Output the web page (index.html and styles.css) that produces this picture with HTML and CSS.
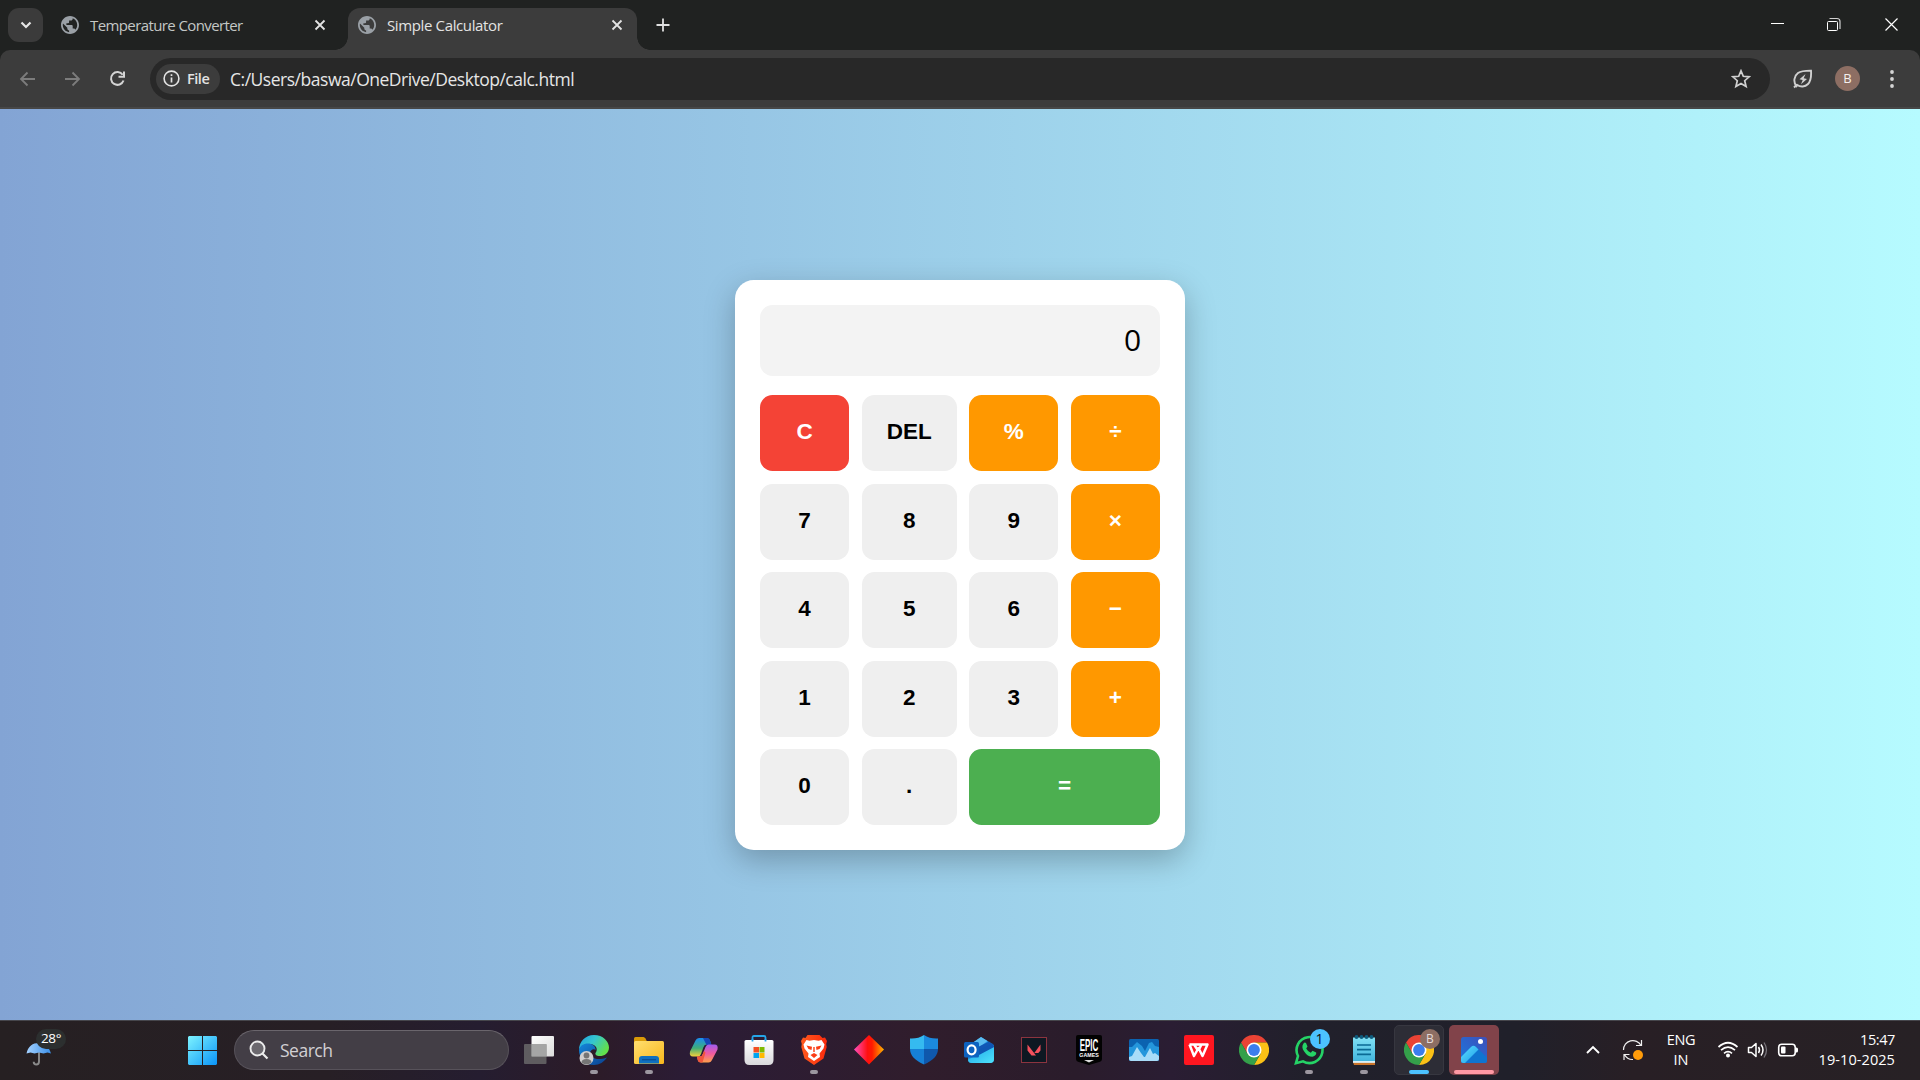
FILE: index.html
```html
<!DOCTYPE html>
<html lang="en">
<head>
<meta charset="utf-8">
<title>Simple Calculator</title>
<link rel="stylesheet" href="styles.css">
</head>
<body>
<svg width="0" height="0" class="defs" aria-hidden="true">
  <defs>
    <linearGradient id="win" x1="0" y1="0" x2="1" y2="1"><stop offset="0" stop-color="#7df3ff"/><stop offset="1" stop-color="#0a94f8"/></linearGradient>
    <linearGradient id="umb" x1="0" y1="0" x2="1" y2="0"><stop offset="0" stop-color="#a5d2ff"/><stop offset="1" stop-color="#3a8fe8"/></linearGradient>
    <linearGradient id="edgeTop" x1="0" y1="0" x2="1" y2="0.5"><stop offset="0" stop-color="#1d9fe0"/><stop offset=".5" stop-color="#35c6cf"/><stop offset="1" stop-color="#62e04c"/></linearGradient>
    <linearGradient id="edgeLow" x1="0" y1="0" x2="1" y2="1"><stop offset="0" stop-color="#1488dc"/><stop offset="1" stop-color="#0b3f8d"/></linearGradient>
    <linearGradient id="folder" x1="0" y1="0" x2="1" y2="1"><stop offset="0" stop-color="#ffdf70"/><stop offset="1" stop-color="#f8b71c"/></linearGradient>
    <linearGradient id="copA" x1="0" y1="0" x2="0" y2="1"><stop offset="0" stop-color="#1a8df0"/><stop offset=".55" stop-color="#3fae78"/><stop offset="1" stop-color="#f4d03a"/></linearGradient>
    <linearGradient id="copB" x1="0" y1="0" x2="0" y2="1"><stop offset="0" stop-color="#a05cf0"/><stop offset=".5" stop-color="#ef5aa0"/><stop offset="1" stop-color="#ffa04a"/></linearGradient>
    <linearGradient id="bag" x1="0" y1="0" x2="0" y2="1"><stop offset="0" stop-color="#ffffff"/><stop offset="1" stop-color="#d9d9dc"/></linearGradient>
    <linearGradient id="brave" x1="0" y1="0" x2="1" y2="0"><stop offset="0" stop-color="#ff5a1e"/><stop offset="1" stop-color="#fb2a0c"/></linearGradient>
    <linearGradient id="dia" x1="0" y1="0" x2="1" y2="0"><stop offset="0" stop-color="#ff4fc0"/><stop offset=".45" stop-color="#ff1010"/><stop offset=".6" stop-color="#ff1a00"/><stop offset="1" stop-color="#ffb400"/></linearGradient>
    <linearGradient id="mail" x1="0" y1="0" x2="1" y2="1"><stop offset="0" stop-color="#1ea4e8"/><stop offset="1" stop-color="#4fe3fb"/></linearGradient>
    <linearGradient id="pad" x1="0" y1="0" x2="0" y2="1"><stop offset="0" stop-color="#7fe0f4"/><stop offset="1" stop-color="#3fb3dc"/></linearGradient>
    <linearGradient id="photo" x1="1" y1="0" x2="0" y2="1"><stop offset="0" stop-color="#3e4fb8"/><stop offset="1" stop-color="#1a78e0"/></linearGradient>
    <linearGradient id="hill" x1="0" y1="0" x2="1" y2="1"><stop offset="0" stop-color="#5fdcff"/><stop offset="1" stop-color="#1a9fe8"/></linearGradient>
    <linearGradient id="task" x1="0" y1="0" x2="1" y2="1"><stop offset="0" stop-color="#ffffff"/><stop offset="1" stop-color="#dcdcdc"/></linearGradient>
  </defs>
  <symbol id="globe" viewBox="2 2 20 20">
    <path d="M12 2C6.480 2 2 6.480 2 12s4.480 10 10 10 10-4.480 10-10S17.520 2 12 2zm-1 17.930c-3.950-.490-7-3.850-7-7.930 0-.620.080-1.210.210-1.790L9 15v1c0 1.100.900 2 2 2v1.930zm6.900-2.540c-.260-.810-1-1.390-1.900-1.390h-1v-3c0-.550-.450-1-1-1H8v-2h2c.550 0 1-.450 1-1V7h2c1.100 0 2-.900 2-2v-.410c2.930 1.190 5 4.060 5 7.410 0 2.080-.800 3.970-2.100 5.390z" fill="#9aa0a6"/>
  </symbol>
  <symbol id="x" viewBox="0 0 12 12"><path d="M1.500 1.500l9 9M10.500 1.500l-9 9" stroke="#e3e3e3" stroke-width="1.800" fill="none"/></symbol>
  <symbol id="chrome" viewBox="0 0 30 30">
    <path d="M2 7.500A15 15 0 0 1 28 7.500L15 7.500 8.500 18.800z" fill="#ea4335"/>
    <path d="M28 7.500A15 15 0 0 1 15 30l6.500-11.200L15 7.500z" fill="#fbc116"/>
    <path d="M2 7.500A15 15 0 0 0 15 30l6.500-11.200H8.500z" fill="#34a04a"/>
    <circle cx="15" cy="15" r="7.500" fill="#fff"/><circle cx="15" cy="15" r="5.900" fill="#3b7ded"/>
  </symbol>
</svg>

<header class="tabstrip">
  <button class="tab-search" aria-label="Search tabs"><svg width="12" height="8" viewBox="0 0 12 8"><path d="M1.500 1.500L6 6l4.500-4.500" fill="none" stroke="#e6e6e6" stroke-width="2.200"/></svg></button>
  <div class="tab">
    <svg class="favicon"><use href="#globe"/></svg>
    <span class="tab-title title-long">Temperature Converter</span>
    <svg class="tab-close"><use href="#x"/></svg>
  </div>
  <div class="tab active">
    <svg class="favicon"><use href="#globe"/></svg>
    <span class="tab-title title-short">Simple Calculator</span>
    <svg class="tab-close"><use href="#x"/></svg>
  </div>
  <svg class="new-tab" width="14" height="14" viewBox="0 0 14 14"><path d="M7 0.500v13M.5 7h13" stroke="#e0e0e0" stroke-width="1.800"/></svg>
  <div class="window-controls">
    <svg viewBox="0 0 57 50"><path d="M22 23.500h13" stroke="#fff" stroke-width="1"/></svg>
    <svg viewBox="0 0 57 50"><rect x="21.500" y="21.500" width="10" height="9" rx="1" fill="none" stroke="#fff"/><path d="M23.500 18.500h7.500q3 0 3 3v7.500" fill="none" stroke="#d0d0d0" stroke-width="1.200"/></svg>
    <svg viewBox="0 0 57 50"><path d="M22.500 18.500l12 12M34.500 18.500l-12 12" stroke="#fff" stroke-width="1.200"/></svg>
  </div>
</header>

<nav class="toolbar">
  <div class="nav-buttons">
    <svg viewBox="0 0 45 42"><path d="M35 21H21M27.500 14.500L21 21l6.500 6.500" fill="none" stroke="#7c7c7c" stroke-width="1.800"/></svg>
    <svg viewBox="0 0 45 42"><path d="M20 21h14M27.500 14.500L34 21l-6.500 6.500" fill="none" stroke="#7c7c7c" stroke-width="1.800"/></svg>
    <svg viewBox="0 0 45 42"><path d="M32.700 16.800A6.400 6.400 0 1 0 33.500 22.500" fill="none" stroke="#d4d4d4" stroke-width="2"/><path d="M34 13.500v5.300h-5.500" fill="none" stroke="#d4d4d4" stroke-width="2"/></svg>
  </div>
  <div class="omnibox">
    <span class="chip">
      <svg width="17" height="17" viewBox="0 0 17 17"><circle cx="8.500" cy="8.500" r="7.400" fill="none" stroke="#e3e3e3" stroke-width="1.600"/><path d="M8.500 7.500v5M8.500 4.200v1.800" stroke="#e3e3e3" stroke-width="1.700"/></svg>
      <span class="chip-text">File</span>
    </span>
    <span class="url">C:/Users/baswa/OneDrive/Desktop/calc.html</span>
    <svg class="star" width="20" height="20" viewBox="0 0 20 20"><path d="M10 1.800l2.300 5.500 5.900.5-4.500 3.900 1.400 5.800L10 14.400l-5.100 3.100 1.400-5.800-4.500-3.900 5.900-.5z" fill="none" stroke="#d0d0d0" stroke-width="1.700"/></svg>
  </div>
  <svg class="leaf" width="20" height="20" viewBox="0 0 20 20"><path d="M3.500 17.200C0 13 1 7 5 4c3.500-2.500 8-2.400 13-2.400.4 5.500.3 10-3 13.400-3 3-7.500 3.200-10.700 1z" fill="none" stroke="#d0d0d0" stroke-width="1.900"/><path d="M1 18.500l3-3" stroke="#d0d0d0" stroke-width="1.900"/><path d="M12.500 5l-6 5.300 3.200.6L8 15.200l6-5.300-3.300-.7z" fill="#d0d0d0"/></svg>
  <span class="avatar">B</span>
  <svg class="menu" width="6" height="18" viewBox="0 0 6 18"><g fill="#d4d4d4"><circle cx="3" cy="2" r="1.900"/><circle cx="3" cy="9" r="1.900"/><circle cx="3" cy="16" r="1.900"/></g></svg>
</nav>

<main class="page">
  <section class="calculator">
    <div class="display">0</div>
    <div class="keys">
      <button class="key clear">C</button><button class="key">DEL</button><button class="key op">%</button><button class="key op">÷</button>
      <button class="key">7</button><button class="key">8</button><button class="key">9</button><button class="key op">×</button>
      <button class="key">4</button><button class="key">5</button><button class="key">6</button><button class="key op">−</button>
      <button class="key">1</button><button class="key">2</button><button class="key">3</button><button class="key op">+</button>
      <button class="key">0</button><button class="key">.</button><button class="key equals">=</button>
    </div>
  </section>
</main>

<footer class="taskbar">
  <div class="weather">
    <svg width="26" height="24" viewBox="0 0 26 24"><path d="M13 10v9.500q0 3-2.600 3-2.700 0-2.700-2.800" fill="none" stroke="#8b8b8b" stroke-width="1.900"/><path d="M.5 11.500C2 4 7 1 12.500 1S23 4 25 11.500l-3.500-1-4 1-4.500-1-4.500 1-4-1z" fill="url(#umb)"/></svg>
    <span class="temp">28°</span>
  </div>
  <div class="start"><svg width="29" height="29" viewBox="0 0 29 29"><path d="M1 0h13v14H0V1zM15 0h13l1 1v13H15zM0 15h14v14H1l-1-1zM15 15h14v13l-1 1H15z" fill="url(#win)"/></svg></div>
  <div class="search">
    <svg width="20" height="20" viewBox="0 0 20 20"><circle cx="8.500" cy="8.500" r="7" fill="#6b686e" stroke="#ececec" stroke-width="1.900"/><path d="M13.500 13.500l5 5" stroke="#ececec" stroke-width="2.200"/></svg>
    <span>Search</span>
  </div>
  <div class="apps">
    <div class="app"><svg viewBox="0 0 30 30"><rect x="7.500" y="1" width="22.500" height="20.500" rx="1" fill="url(#task)"/><rect x="0" y="9" width="22.500" height="20" rx="1" fill="#6d6d6d" opacity=".8"/><rect x="7.500" y="9" width="15" height="12.500" fill="#a5a5a5"/></svg></div>
    <div class="app running"><svg viewBox="0 0 30 30"><path d="M0 15C0 7 6 0 15 0s15 6.500 15 12.500-5 8.500-9 8.500-5-1.500-4.500-3c2-2 2-7-3-8.500C8 8 2 10 0 15z" fill="url(#edgeTop)"/><path d="M0 15C1 9.500 7 7.500 12 9c3 .9 5 3.500 4.500 6-1-1.500-5-1-5.500 3-.3 5 7 8 17 4.500C25 27 20.500 30 15 30 6 30 0 23 0 15z" fill="url(#edgeLow)"/><circle cx="7.500" cy="23" r="7" fill="#cfcfcf"/><circle cx="7.500" cy="20.500" r="2.900" fill="#757575"/><path d="M2.500 27.500q0-3.500 5-3.500t5 3.500q-5 4-10 0z" fill="#757575"/></svg></div>
    <div class="app running"><svg viewBox="0 0 30 30"><path d="M0 3.500Q0 2 1.500 2h8q1 0 2 1.500l1 2V9H0z" fill="#d99a08"/><rect y="6" width="30" height="23" rx="1.500" fill="url(#folder)"/><path d="M5 28.500V24q0-3 3-3h14q3 0 3 3v4.500z" fill="#0f70c0"/><path d="M8 24.700h14" stroke="#0a4e95" stroke-width="1.300"/></svg></div>
    <div class="app"><svg viewBox="0 0 30 30"><path d="M6.500 5.500Q7.500 3 10 3h7.500q3 0 4 4l.8 2.500h-5q-2 0-3 3L12 19Q11 21.500 9 21.500H4q-4 0-3-5z" fill="url(#copA)"/><path d="M14 3h4q2.500 0 3.500 4l1 3h-5z" fill="#1647b8"/><path d="M23.500 24Q22 27.500 19.500 27.500H12q-3 0-3.500-3.500L8 21.500h3q2 0 3-3l2.500-6.500q1-2.500 3-2.500h6q4 0 3 5z" fill="url(#copB)"/><path d="M8 21.500h3q2 0 3-3l1-2.500 1.500 1.500-3 10H12q-3 0-3.500-3.500z" fill="#f0563c"/></svg></div>
    <div class="app"><svg viewBox="0 0 30 30"><path d="M8.500 7V2.500q0-1.500 1.500-1.500h10q1.500 0 1.500 1.500V7" fill="none" stroke="#25a5e8" stroke-width="1.800"/><path d="M.5 6.500q0-1.500 1.500-1.500h26q1.500 0 1.500 1.500V25q0 5-5 5h-19q-5 0-5-5z" fill="url(#bag)"/><path d="M9.500 12H15v5.500H9.500z" fill="#f25022"/><path d="M15.500 12H20.500v5.500h-5z" fill="#7fba00"/><path d="M9.500 18H15v5H9.500z" fill="#00a4ef"/><path d="M15.500 18H20.500v5h-5z" fill="#ffb900"/><path d="M8.500 4v2.500M21.500 4v2.500" stroke="#25a5e8" stroke-width="1.800"/></svg></div>
    <div class="app running"><svg viewBox="0 0 30 30"><path d="M8.500 0h12l3 3 2.500-.5 2 3.500-.8 3 .5 3-3.200 11.500L15 30 5.500 23.500 2.300 12l.5-3L2 6l2-3.500 2.500.5z" fill="url(#brave)"/><path d="M15 5l4.500.8 3-.8 3 4.500-1 4-4 5 .5 3.500L15 26l-6-4 .5-3.500-4-5-1-4L7.500 5l3 .8z" fill="#fff"/><path d="M7.500 10.500l5.500 1.200-.5 3.300-3-1zM22.500 10.500L17 11.700l.5 3.300 3-1zM15 18l3.500 2L15 23l-3.500-3zM14.300 12h1.400v5h-1.400z" fill="#fb3d15"/></svg></div>
    <div class="app"><svg viewBox="0 0 30 30"><path d="M15 0l15 14.500L15 29.500 0 14.500z" fill="url(#dia)"/></svg></div>
    <div class="app"><svg viewBox="0 0 30 30"><path d="M15 0q6 4 14 3.500V14H15z" fill="#1b8ade"/><path d="M15 0Q9 4 1 3.500V14h14z" fill="#35baf0"/><path d="M1 14h14v15.500C6 25.500 1 20.500 1 14z" fill="#1680d6"/><path d="M29 14H15v15.500C24 25.500 29 20.500 29 14z" fill="#0f58ac"/></svg></div>
    <div class="app"><svg viewBox="0 0 30 30"><path d="M4 11L17 2l12 7.500q1 .7 1 2V24q0 4-4 4H8q-4 0-4-4z" fill="#1d8ee0"/><path d="M7 9l10-7 6.500 4L10 16z" fill="#5bbcf0"/><path d="M10 14l15-7.500 4 3L13 20z" fill="#1157b5"/><path d="M30 12v12q0 4-4 4H8q-4 0-4-3.500z" fill="url(#mail)"/><path d="M14 15.500L29 8.500l1 3.500-15 8z" fill="#0f56b3"/><rect y="7" width="15" height="15.500" rx="1.500" fill="#0d62c0"/><ellipse cx="7.600" cy="14.800" rx="4" ry="4.500" fill="none" stroke="#fff" stroke-width="2.200"/></svg></div>
    <div class="app"><svg viewBox="0 0 30 30"><rect x="2.500" y="2.500" width="25" height="25" fill="#0e1822" stroke="#8c343f"/><path d="M8.500 9.500l8.500 11h-4.500l-4-5zM21.500 9.500v6L19.300 18h-4z" fill="#f4505c"/></svg></div>
    <div class="app"><svg viewBox="0 0 30 30"><path d="M2 2q0-2 2-2h22q2 0 2 2v22q0 2-2 2.700L15 30 4 26.700Q2 26 2 24z" fill="#020202"/><path d="M10 25h10l-5 2.500z" fill="#ddd"/><g transform="translate(15 15.500) scale(.5 1)"><text text-anchor="middle" class="epic-big">EPIC</text></g><text x="15" y="22.300" text-anchor="middle" class="epic-small">GAMES</text></svg></div>
    <div class="app"><svg viewBox="0 0 30 30"><rect y="4" width="30" height="22" rx="1.500" fill="#0b62b0"/><path d="M0 12h3l5-5 5 4 3 5 4-8 3-1 3 4 4 1v12H0z" fill="#2496dc"/><path d="M0 22l3-1 5-9 4 6 3 4h1l5-9 3 6 2-1 4 3v3q0 2-2 2H2q-2 0-2-2z" fill="#a9dcf8"/></svg></div>
    <div class="app"><svg viewBox="0 0 30 30"><rect width="30" height="30" rx="2" fill="#ff1620"/><path d="M5.500 9.500h12l-2 4M5.500 9.500l4.500 11.500 4.500-8 4 8 5-11.500h-5.500M10 9.500l4 6" fill="none" stroke="#fff" stroke-width="2.500" stroke-linejoin="round"/></svg></div>
    <div class="app"><svg viewBox="0 0 30 30"><use href="#chrome"/></svg></div>
    <div class="app running"><svg viewBox="0 0 30 30"><path d="M2 28.200l2-7.200A13 13 0 1 1 9 26.300z" fill="none" stroke="#25d366" stroke-width="2.600"/><path d="M9.500 8.500q1-1.500 2.500-.5l1.500 3.500-1.300 2q1.500 3 4.600 4.200l1.700-1.900 3.700 1.700q.5 3-3.700 4.200-5 0-8.500-5.500Q7 12 9.500 8.500z" fill="#25d366"/></svg><span class="badge count">1</span></div>
    <div class="app running"><svg viewBox="0 0 30 30"><path d="M4 27h22v3H5z" fill="#c9742a"/><rect x="4" y="2.500" width="22" height="25" fill="url(#pad)"/><path d="M4 26.200h22v1.500H4z" fill="#fff"/><path d="M8 10h14M8 14.700h14M8 19.400h14" stroke="#0a6a94" stroke-width="1.700"/><g fill="#0e5c7e"><circle cx="7.500" cy="2" r="1.900"/><circle cx="12.500" cy="2" r="1.900"/><circle cx="17.500" cy="2" r="1.900"/><circle cx="22.500" cy="2" r="1.900"/></g></svg></div>
    <div class="app current"><svg viewBox="0 0 30 30"><use href="#chrome"/></svg><span class="badge profile">B</span></div>
    <div class="app alert"><svg viewBox="0 0 30 30"><rect x="2" y="2" width="26" height="26" rx="2.500" fill="url(#photo)"/><path d="M2 22l10-10q2.500-2.500 5 0l11 10.500V26q0 2-2.500 2H4.500Q2 28 2 25.500z" fill="#0f74d0"/><path d="M2 22l10-10q2.500-2.500 5 0l2.500 2.500L6 28H4.500Q2 28 2 25.500z" fill="url(#hill)"/><circle cx="21.500" cy="6.500" r="2.500" fill="#fff"/></svg></div>
  </div>
  <div class="tray">
    <svg class="tray-item" viewBox="0 0 40 30"><path d="M14 18l6-6 6 6" fill="none" stroke="#fff" stroke-width="1.900"/></svg>
    <svg class="tray-item" viewBox="0 0 40 30"><path d="M10.500 15a9.300 9.300 0 0 1 17.500-4.500M28.500 5v5.500H23M20 24.500a9 9 0 0 1-8.500-5M11 25v-5.500h5.500" fill="none" stroke="#f0f0f0" stroke-width="1.200"/><circle cx="25" cy="20" r="5" fill="#ff9c0a"/></svg>
    <div class="lang"><span class="eng">ENG</span><span>IN</span></div>
    <svg class="status" viewBox="0 0 30 30"><g fill="none" stroke="#fff" stroke-width="1.700"><path d="M5.500 12q9.500-8.500 19 0"/><path d="M8 15.200q7-6 14 0"/><path d="M11 18.300q4-3.200 8 0"/></g><circle cx="15" cy="20.500" r="2" fill="#fff"/></svg>
    <svg class="status" viewBox="0 0 30 30"><path d="M5.500 12.500h3l4.500-4v13l-4.500-4h-3z" fill="none" stroke="#fff" stroke-width="1.500" stroke-linejoin="round"/><path d="M15.500 12q2 3 0 6M18 9.500q4 5.500 0 11" fill="none" stroke="#fff" stroke-width="1.500"/><path d="M21 7.500q5 7.500 0 15" fill="none" stroke="#77737a" stroke-width="1.300"/></svg>
    <svg class="status" viewBox="0 0 30 30"><rect x="5.700" y="9.200" width="16.500" height="11.600" rx="3" fill="none" stroke="#fff" stroke-width="1.600"/><rect x="8" y="11.500" width="4.500" height="7" rx="1" fill="#fff"/><path d="M22.500 12.500h1q1.500 0 1.500 1.500v2q0 1.500-1.500 1.500h-1z" fill="#fff"/></svg>
    <div class="clock"><span class="time">15:47</span><span class="date">19-10-2025</span></div>
  </div>
</footer>
</body>
</html>
```
FILE: styles.css
```css
* { box-sizing: border-box; }
body {
  margin: 0;
  width: 1920px;
  height: 1080px;
  overflow: hidden;
  display: flex;
  flex-direction: column;
  font-family: "Open Sans", "Noto Sans", sans-serif;
  background: #202221;
}
svg { display: block; flex: none; }
.defs { position: absolute; }
button { border: 0; padding: 0; font: inherit; }

/* Tab strip */
.tabstrip {
  flex: none;
  height: 50px;
  display: flex;
  align-items: center;
  padding-left: 8px;
  background: #202221;
}
.tab-search {
  width: 35px;
  height: 34px;
  border-radius: 11px;
  background: #3b3b3b;
  display: flex;
  align-items: center;
  justify-content: center;
}
.tab {
  display: flex;
  align-items: center;
  height: 42px;
  margin-top: 8px;
  padding: 0 14px 8px 10px;
  color: #c4c7c5;
}
.tab:not(.active) { width: 289px; margin-left: 8px; padding-right: 14px; }
.tab.active {
  position: relative;
  width: 289px;
  margin-left: 8px;
  background: #3c3c3c;
  border-radius: 12px 12px 0 0;
  color: #e3e3e3;
}
.tab.active::before,
.tab.active::after {
  content: "";
  position: absolute;
  bottom: 0;
  width: 13px;
  height: 13px;
}
.tab.active::before { left: -13px; background: radial-gradient(circle at 0 0, transparent 12.500px, #3c3c3c 13px); }
.tab.active::after { right: -13px; background: radial-gradient(circle at 100% 0, transparent 12.500px, #3c3c3c 13px); }
.favicon { width: 18px; height: 18px; }
.tab-title { margin-left: 11px; font-size: 15px; white-space: nowrap; }
.title-long { letter-spacing: -0.600px; }
.title-short { letter-spacing: -0.370px; }
.tab-close { width: 12px; height: 12px; margin-left: auto; }
.new-tab { margin-left: 19px; }
.window-controls { display: flex; margin-left: auto; }
.window-controls svg { width: 57px; height: 50px; }

/* Toolbar */
.toolbar {
  flex: none;
  height: 59px;
  display: flex;
  align-items: center;
  padding-right: 25px;
  background: #3c3c3c;
  border-bottom: 2px solid #474747;
  border-radius: 10px 10px 0 0;
}
.nav-buttons { display: flex; width: 150px; }
.nav-buttons svg { width: 45px; height: 42px; }
.omnibox {
  width: 1620px;
  height: 42px;
  border-radius: 21px;
  background: #282828;
  display: flex;
  align-items: center;
  padding: 0 19px 0 6px;
}
.chip {
  width: 64px;
  height: 30px;
  border-radius: 15px;
  background: #3c3c3c;
  color: #e3e3e3;
  display: flex;
  align-items: center;
  gap: 7px;
  padding-left: 7px;
}
.chip-text { font-size: 14.500px; font-weight: 600; letter-spacing: -0.450px; }
.url { margin-left: 10px; color: #e6e6e6; font-size: 17.500px; letter-spacing: -0.480px; }
.star { margin-left: auto; }
.leaf { margin-left: 23px; }
.avatar {
  width: 25px;
  height: 25px;
  margin-left: 22px;
  border-radius: 50%;
  background: #8d6e63;
  color: #f5efed;
  font-size: 13px;
  line-height: 25px;
  text-align: center;
}
.menu { margin-left: auto; }

/* Calculator page */
.page {
  flex: 1;
  display: flex;
  align-items: center;
  justify-content: center;
  padding-top: 1px;
  background: linear-gradient(to right, #83a4d4, #b6fbff);
}
.calculator {
  width: 450px;
  height: 570px;
  padding: 25px;
  border-radius: 18.750px;
  background: #fff;
  box-shadow: 0 10px 31px rgba(0, 0, 0, 0.250);
}
.display {
  height: 71px;
  margin-bottom: 19px;
  padding: 0 18.750px;
  border-radius: 12.500px;
  background: #f3f3f3;
  color: #000;
  font-size: 30px;
  line-height: 69px;
  text-align: right;
}
.keys {
  display: grid;
  grid-template-columns: 1fr 95px 1fr 1fr;
  grid-auto-rows: 76px;
  gap: 12.600px 12.500px;
}
.key {
  padding-bottom: 2px;
  border-radius: 12.500px;
  background: #efefef;
  color: #000;
  font: bold 22.500px "Liberation Sans", Arial, sans-serif;
}
.key.op { background: #ff9800; color: #fff; }
.key.clear { background: #f44336; color: #fff; }
.key.equals { grid-column: span 2; background: #4caf50; color: #fff; }

/* Taskbar */
.taskbar {
  flex: none;
  height: 60px;
  display: flex;
  align-items: center;
  padding-bottom: 1px;
  border-top: 1px solid #46464c;
  background: linear-gradient(to right, #262022 0, #271f25 17%, #251d30 25%, #2c1b28 31%, #2b1c36 36%, #301d2c 48%, #2a1c2b 56%, #2a1d33 61%, #21202b 68%, #20202a 79%, #281f25 85%, #272125 100%);
}
.weather { position: relative; width: 175px; height: 58px; padding: 21px 0 0 26px; }
.temp {
  position: absolute;
  left: 36px;
  top: 8px;
  width: 30px;
  height: 20px;
  border-radius: 10px;
  background: #2c2f2f;
  color: #fff;
  font-size: 13.500px;
  line-height: 19px;
  padding-left: 5px;
  letter-spacing: -0.400px;
}
.start { width: 55px; display: flex; justify-content: center; }
.search {
  width: 275px;
  height: 40px;
  margin: 0 2.500px 0 4px;
  border-radius: 20px;
  border: 1px solid #57525a;
  border-top-color: #6a656c;
  background: #433e46;
  color: #d2d0d4;
  display: flex;
  align-items: center;
  gap: 11px;
  padding-left: 14px;
  font-size: 17.500px;
  letter-spacing: -0.500px;
}
.apps { display: flex; }
.app {
  position: relative;
  width: 55px;
  height: 50px;
  display: flex;
  align-items: center;
  justify-content: center;
}
.app > svg { width: 30px; height: 30px; overflow: visible; }
.app.running::after,
.app.current::after,
.app.alert::after {
  content: "";
  position: absolute;
  bottom: 1px;
  width: 8px;
  height: 4px;
  border-radius: 2px;
  background: #9c97a0;
}
.app.current,
.app.alert { width: 50px; margin: 0 2.500px; border-radius: 5px; }
.app.current { background: #2d2d36; border: 1px solid #373740; }
.app.current::after { bottom: 0; width: 20px; background: #4cc2ff; }
.app.alert { background: #81434a; }
.app.alert::after { width: 40px; background: #ff99a4; }
.badge {
  position: absolute;
  width: 20px;
  height: 20px;
  border-radius: 50%;
  font-size: 14px;
  line-height: 20px;
  text-align: center;
}
.badge.count { left: 28px; top: 4px; background: #4cc2ff; color: #111; }
.badge.profile { left: 25px; top: 3px; background: #8d6e63; color: #e5dcd9; font-size: 12px; }
.epic-big { font: bold 16px "Liberation Sans", sans-serif; fill: #fff; }
.epic-small { font: bold 5.300px "Liberation Sans", sans-serif; fill: #fff; }

.tray { display: flex; align-items: center; margin-left: auto; padding-right: 25px; color: #fff; font-size: 14.500px; line-height: 20px; }
.tray-item { width: 40px; height: 30px; }
.lang { width: 56px; margin-right: 4px; display: flex; flex-direction: column; align-items: center; }
.eng { letter-spacing: -0.300px; }
.status { width: 30px; height: 30px; }
.clock { width: 92px; display: flex; flex-direction: column; align-items: flex-end; }
.time { letter-spacing: -0.400px; }
.date { letter-spacing: 0.080px; }
```
